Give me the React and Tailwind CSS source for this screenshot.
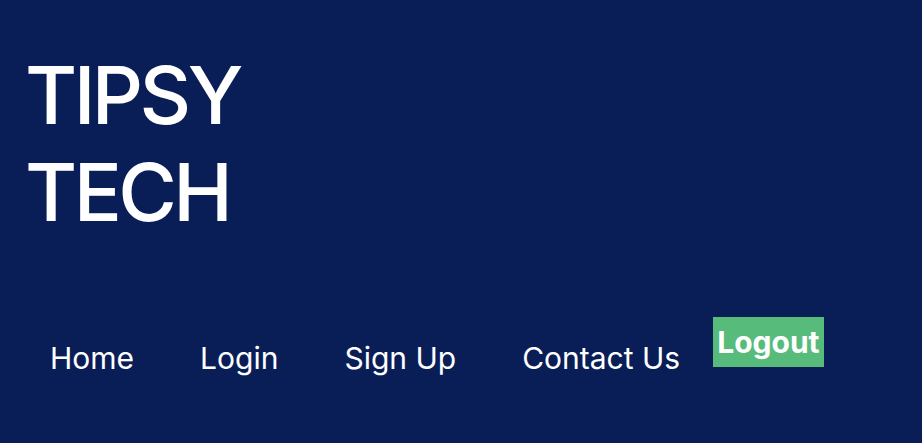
import React from 'react';

const links = ['Home', 'Login', 'Sign Up', 'Contact Us'];

export default function App() {
  return (
    <div className="min-h-[443px] w-full bg-[#091e57] text-white font-['Inter',sans-serif]">
      {/* Brand */}
      <h1 className="pt-[46px] pl-[25px] text-[80px] leading-[97px] font-medium tracking-[-0.045em]">
        TIPSY
        <br />
        TECH
      </h1>

      {/* Nav */}
      <nav className="mt-[77px] flex items-start pl-[17px]">
        {links.map((l) => (
          <a key={l} href="#" className="px-[33px] pt-[23px] text-[30px] leading-[36px]">
            {l}
          </a>
        ))}
        <button className="bg-[#57bb7c] px-[4px] py-[7px] text-[30px] leading-[36px] font-bold text-white">
          Logout
        </button>
      </nav>
    </div>
  );
}
